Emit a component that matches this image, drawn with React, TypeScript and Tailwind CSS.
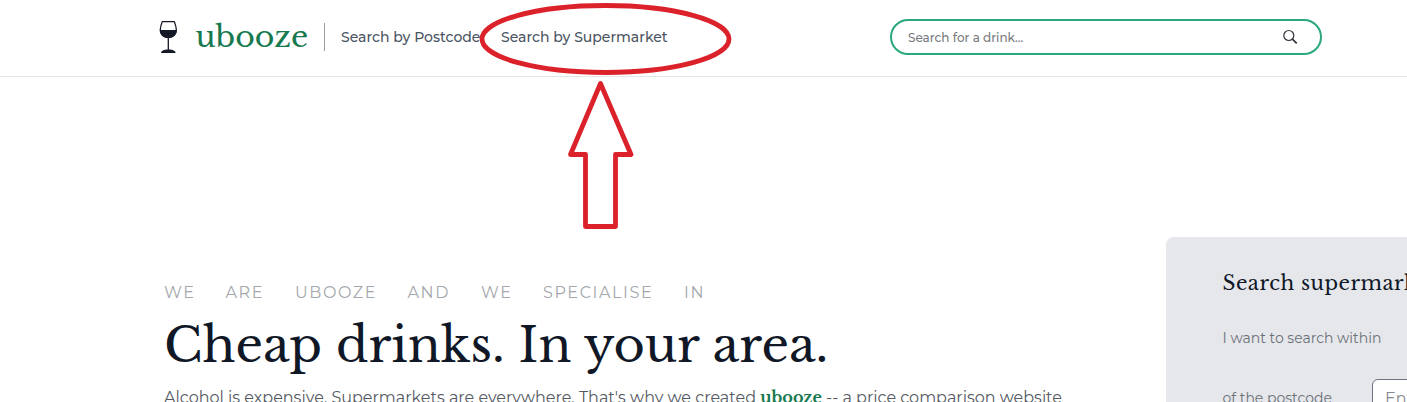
const sans = "font-['Montserrat','Inter',sans-serif]";
const serif = "font-['Libre_Baskerville','Liberation_Serif',serif]";

function WineGlass() {
  return (
    <svg className="h-[34px] w-5 shrink-0" viewBox="0 0 20 34" fill="none">
      <path d="M4.200 1.700h12.200c.8 2.300 1.900 5.300 1.900 7.800 0 4.800-3.400 8-8 8s-8-3.200-8-8c0-2.500 1.100-5.500 1.900-7.800z" stroke="#151827" strokeWidth="1.300" strokeLinejoin="round" />
      <path d="M1.700 10h17.200c0 4.900-3.800 8.100-8.600 8.100S1.700 14.900 1.700 10z" fill="#151827" />
      <path d="M10.300 18v13" stroke="#151827" strokeWidth="1.300" />
      <path d="M3 33c0-2 2.700-3.500 7.300-3.500s7.300 1.500 7.300 3.500z" fill="#151827" />
    </svg>
  );
}

function Header() {
  return (
    <header className="flex h-[77px] shrink-0 items-start border-b border-[#e4e5e7] pl-[158px]">
      <div className="flex h-[74px] items-center">
        <WineGlass />
        <span className={`ml-[17.5px] w-[128.5px] whitespace-nowrap text-[30px] leading-[36px] text-[#16794f] ${serif}`}>ubooze</span>
        <span className="h-7 w-px bg-[#9a9ea5]" />
        <nav className="ml-4 flex whitespace-nowrap text-[14px] font-medium leading-5 text-[#4b5563]">
          <a className="w-[160px]">Search by Postcode</a>
          <a className="w-[389px]">Search by Supermarket</a>
        </nav>
        <div className="flex h-9 w-[432px] items-center justify-between rounded-full border-2 border-[#2aa879] pl-4 pr-[22px]">
          <span className="pt-px text-[12px] font-medium text-[#787b80]">Search for a drink...</span>
          <svg className="size-4" viewBox="0 0 16 16" fill="none" stroke="#30343a" strokeWidth="1.200">
            <circle cx="6.800" cy="6.500" r="5" />
            <path d="m10.400 10.100 4.300 4.300" strokeWidth="1.700" />
          </svg>
        </div>
      </div>
    </header>
  );
}

function Hero() {
  return (
    <section className="w-[1002px] shrink-0 pt-[204px]">
      <p className="flex h-6 whitespace-nowrap text-[16px] leading-6 tracking-[1.6px] text-[#a4a7ac]">
        <span className="w-[61.5px]">WE</span>
        <span className="w-[69.5px]">ARE</span>
        <span className="w-[112.5px]">UBOOZE</span>
        <span className="w-[73.5px]">AND</span>
        <span className="w-[62px]">WE</span>
        <span className="w-[141px]">SPECIALISE</span>
        <span>IN</span>
      </p>
      <h1 className={`mt-2.5 whitespace-nowrap text-[48px] leading-[60px] text-[#101827] ${serif}`}>Cheap drinks. In your area.</h1>
      <p className="mt-2 whitespace-nowrap text-[16px] leading-7 text-[#555a62]">
        Alcohol is expensive. Supermarkets are everywhere. That's why we created{" "}
        <strong className={`text-[16px] font-bold text-[#16794f] ${serif}`}>ubooze</strong> -- a price comparison website
      </p>
    </section>
  );
}

function SearchPanel() {
  return (
    <aside className="mt-[160px] h-[220px] w-[360px] shrink-0 rounded-lg bg-[#e5e7eb] pl-[56.5px] pt-[31px]">
      <h2 className={`whitespace-nowrap text-[20px] leading-[30px] tracking-[0.5px] text-[#101827] ${serif}`}>Search supermarkets</h2>
      <p className="mt-[30px] whitespace-nowrap text-[14px] leading-5 text-[#6b7078]">I want to search within</p>
      <div className="mt-[31px] flex items-center">
        <span className="w-[149.5px] whitespace-nowrap text-[14px] text-[#6b7078]">of the postcode</span>
        <div className="h-[38px] w-[150px] rounded-md border border-[#6b7280] bg-white px-3 py-[7px] text-[16px] leading-6 text-[#858990]">Enter</div>
      </div>
    </aside>
  );
}

function Annotation() {
  return (
    <svg className="pointer-events-none absolute left-[470px] top-0 h-[240px] w-[280px]" viewBox="0 0 280 240" fill="none" stroke="#db222b" strokeWidth="4.800" strokeLinejoin="round">
      <ellipse cx="135.500" cy="39" rx="123.500" ry="33.500" />
      <path d="M130.500 83.500 161 154.500h-15.500v72h-30v-72H100.500z" />
    </svg>
  );
}

export default function App() {
  return (
    <div className={`relative flex h-[402px] w-full flex-col overflow-hidden bg-white ${sans}`}>
      <Header />
      <main className="flex pl-[164px]">
        <Hero />
        <SearchPanel />
      </main>
      <Annotation />
    </div>
  );
}
